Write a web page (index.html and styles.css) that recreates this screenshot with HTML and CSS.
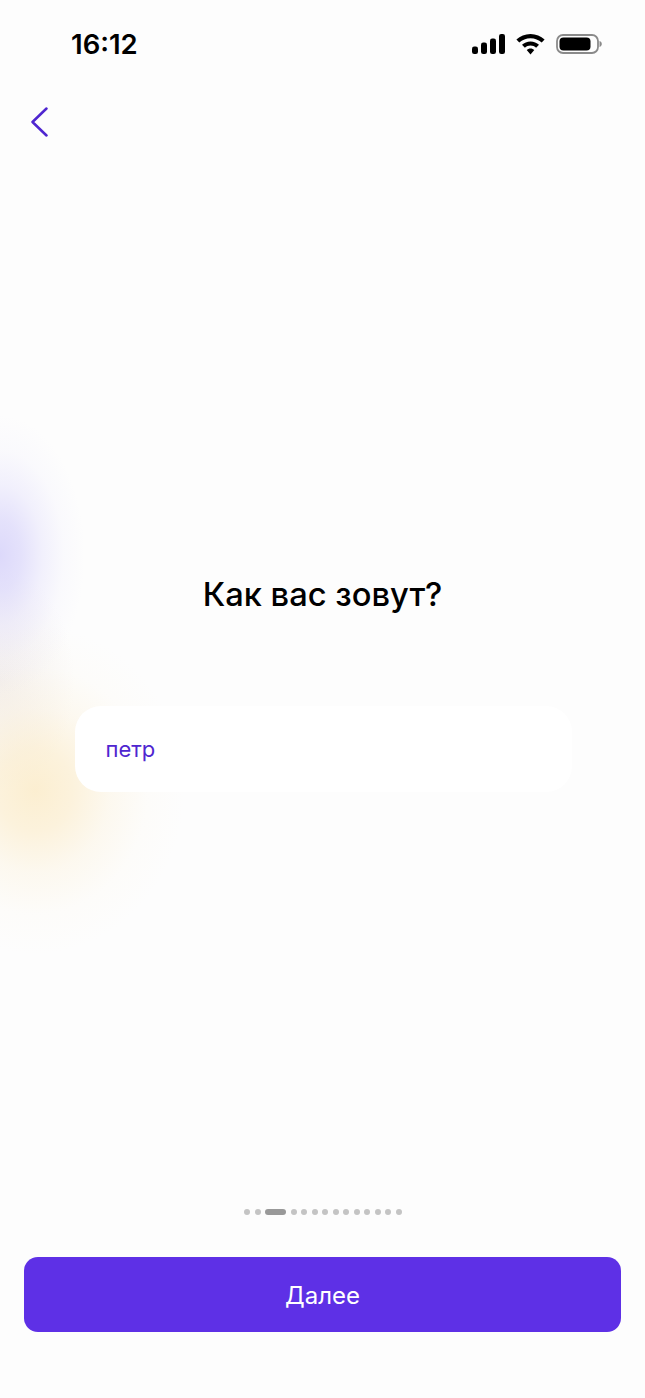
FILE: index.html
```html
<!DOCTYPE html>
<html lang="ru">
<head>
<meta charset="utf-8">
<title>Как вас зовут?</title>
<link rel="stylesheet" href="styles.css">
</head>
<body>
<main class="screen">
  <header class="status">
    <span class="time">16:12</span>
    <div class="status-icons">
      <svg class="signal" width="33" height="20" viewBox="0 0 33 20"><rect x="0" y="12.500" width="6" height="7.500" rx="2.200"/><rect x="9" y="8.500" width="6" height="11.500" rx="2.200"/><rect x="18" y="4.500" width="6" height="15.500" rx="2.200"/><rect x="27" y="0" width="6" height="20" rx="2.200"/></svg>
      <svg class="wifi" width="29" height="21" viewBox="0 0 29 21"><path d="M14.500 0C9 0 4.200 2.100.4 5.600l2.900 3C6.300 5.800 10.200 4.200 14.500 4.200s8.200 1.600 11.200 4.400l2.900-3C24.800 2.100 20 0 14.500 0z"/><path d="M14.500 7.400c-3.300 0-6.300 1.300-8.500 3.300l2.900 3c1.500-1.400 3.500-2.200 5.600-2.200s4.100.8 5.600 2.200l2.900-3c-2.200-2-5.200-3.300-8.500-3.300z"/><path d="M14.500 14.600c-1.500 0-2.800.6-3.800 1.500l3.800 4.400 3.800-4.400c-1-.9-2.300-1.500-3.800-1.500z"/></svg>
      <svg class="battery" width="46" height="20" viewBox="0 0 46 20"><rect x="1" y="1" width="41" height="18" rx="6" fill="none" stroke="#8a8a8a" stroke-width="1.800"/><rect x="3.500" y="3.500" width="31" height="13" rx="4"/><path d="M43.500 7v6c1.500-.4 2.300-1.600 2.300-3s-.8-2.600-2.300-3z" fill="#8a8a8a"/></svg>
    </div>
  </header>
  <nav class="nav">
    <button class="back" type="button" aria-label="Назад">
      <svg width="19" height="30" viewBox="0 0 19 30"><path d="M16.500 1.500 2.500 15l14 13.500" fill="none" stroke="#4f26d0" stroke-width="2.500" stroke-linecap="round" stroke-linejoin="round"/></svg>
    </button>
  </nav>
  <section class="form">
    <h1 class="title">Как вас зовут?</h1>
    <div class="field">петр</div>
  </section>
  <div class="dots">
    <i class="dot"></i><i class="dot"></i><i class="dot active"></i><i class="dot"></i><i class="dot"></i><i class="dot"></i><i class="dot"></i><i class="dot"></i><i class="dot"></i><i class="dot"></i><i class="dot"></i><i class="dot"></i><i class="dot"></i><i class="dot"></i>
  </div>
  <button class="next" type="button">Далее</button>
</main>
</body>
</html>
```

FILE: styles.css
```css
* { box-sizing: border-box; }
html, body { margin: 0; padding: 0; }
body {
  width: 645px;
  height: 1398px;
  overflow: hidden;
  font-family: Inter, "Noto Sans", sans-serif;
  background: #fdfdfd;
}
.screen {
  width: 645px;
  height: 1398px;
  display: flex;
  flex-direction: column;
  background:
    radial-gradient(ellipse 85px 140px at 0px 555px,
      rgba(208,203,250,.72), rgba(208,203,250,.55) 25%, rgba(208,203,250,.26) 50%, rgba(208,203,250,.07) 75%, rgba(208,203,250,0)),
    radial-gradient(ellipse 150px 165px at 35px 790px,
      rgba(251,232,190,.7), rgba(251,232,190,.52) 25%, rgba(251,232,190,.22) 50%, rgba(251,232,190,.05) 75%, rgba(251,232,190,0)),
    radial-gradient(ellipse 75px 110px at 0px 680px,
      rgba(232,224,222,.45), rgba(232,224,222,.22) 50%, rgba(232,224,222,0)),
    #fdfdfd;
}
.status {
  height: 88px;
  flex: none;
  display: flex;
  align-items: center;
  justify-content: space-between;
  padding: 0 43px 0 71px;
}
.time {
  font-size: 27.500px;
  font-weight: 600;
  color: #000;
}
.status-icons {
  display: flex;
  align-items: center;
  gap: 11px;
}
.status-icons svg { display: block; fill: #000; }
.nav {
  height: 68px;
  flex: none;
  padding: 19px 0 0 30px;
}
.back {
  display: block;
  padding: 0;
  border: 0;
  background: none;
  line-height: 0;
}
.form {
  flex: none;
  height: 1053px;
  padding-top: 414px;
  display: flex;
  flex-direction: column;
  align-items: center;
}
.title {
  margin: 0;
  font-size: 32.700px;
  line-height: 48px;
  font-weight: 450;
  color: #000;
}
.field {
  width: 497px;
  height: 86px;
  margin-top: 88px;
  margin-left: 1px;
  padding-left: 31px;
  display: flex;
  align-items: center;
  border-radius: 26px;
  background: #fff;
  color: #4f26d0;
  font-size: 22px;
}
.dots {
  flex: none;
  height: 6px;
  display: flex;
  justify-content: center;
  gap: 4.500px;
  margin-left: 1px;
}
.dot {
  width: 6px;
  height: 6px;
  border-radius: 50%;
  background: #c4c4c4;
}
.dot.active {
  width: 21px;
  border-radius: 3px;
  background: #999;
}
.next {
  flex: none;
  width: 597px;
  height: 75px;
  margin: 42px 0 0 24px;
  padding-top: 2px;
  border: 0;
  border-radius: 14px;
  background: #5e30e6;
  color: #fff;
  font-family: inherit;
  font-size: 24px;
  font-weight: 400;
}
```
